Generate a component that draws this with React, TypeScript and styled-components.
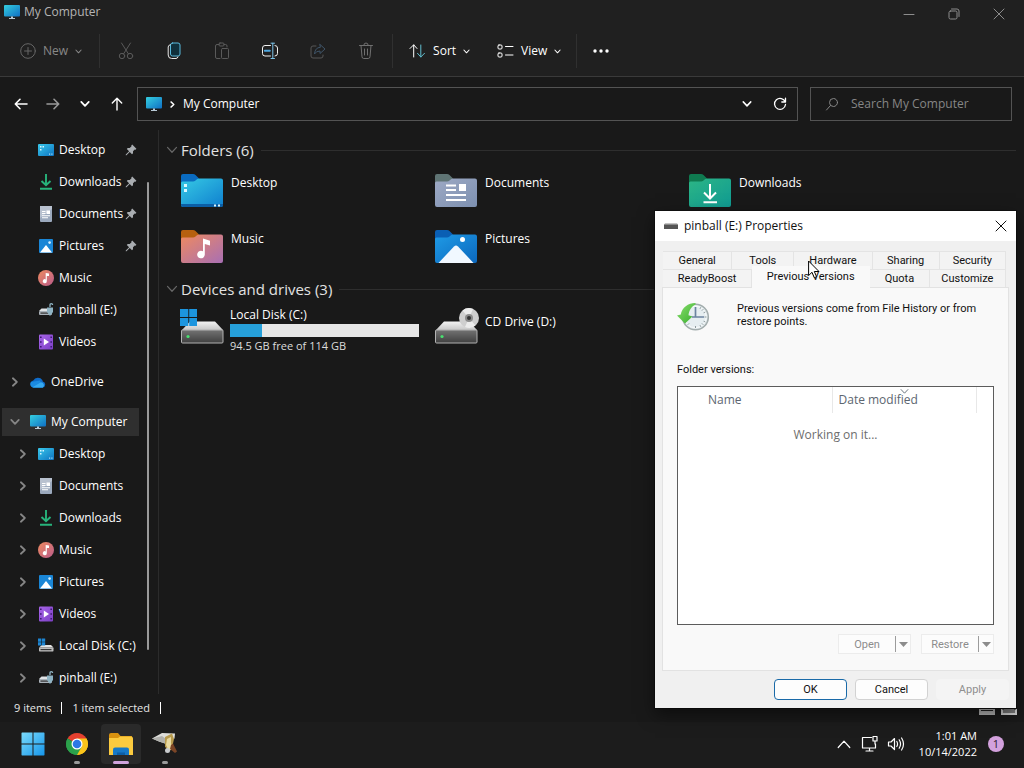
import React from "react";
import styled, { createGlobalStyle, css } from "styled-components";

const shellFont = `"Open Sans", "Noto Sans", sans-serif`;
const dialogFont = `Roboto, "Liberation Sans", sans-serif`;

const GlobalStyle = createGlobalStyle`
  *, *::before, *::after { box-sizing: border-box; }
  body { margin: 0; background: #191919; }
  button, input { font: inherit; color: inherit; }
  button { border: 0; padding: 0; background: none; }
  svg { display: block; flex: none; }
`;

/* ---------- desktop shell ---------- */

const Desktop = styled.div`
  position: relative;
  display: flex;
  flex-direction: column;
  min-height: 100vh;
  background: #191919;
  color: #fff;
  font: 12px/16px ${shellFont};
`;

const Explorer = styled.section`
  display: flex;
  flex-direction: column;
  flex: 1;
`;

const Header = styled.header`
  background: #202020;
  border-bottom: 1px solid #3a3a3a;
`;

const TitleBar = styled.div`
  display: flex;
  align-items: flex-start;
  justify-content: space-between;
  height: 26px;
  padding: 4px 19px 0 4px;
`;

const WindowTitle = styled.h1`
  display: flex;
  gap: 4px;
  margin: 0;
  font-size: 12px;
  font-weight: 400;
  color: #b4b4b4;
`;

const WindowButtons = styled.div`
  display: flex;
  gap: 33px;
  padding-top: 4px;
  color: #8d8d8d;
`;

const Toolbar = styled.div`
  display: flex;
  align-items: center;
  height: 50px;
  padding: 0 20px;
`;

const Tool = styled.button<{ $dim?: boolean; $wide?: boolean }>`
  display: flex;
  align-items: center;
  justify-content: center;
  gap: 7px;
  width: ${(p) => (p.$wide ? "auto" : "48px")};
  height: 32px;
  color: ${(p) => (p.$dim ? "#888" : "#fff")};
`;

const ViewTool = styled(Tool)`
  margin-left: 27px;
`;

const Divider = styled.span<{ $before: number; $after: number }>`
  width: 1px;
  height: 34px;
  margin: 0 ${(p) => p.$after}px 0 ${(p) => p.$before}px;
  background: #303030;
`;

const NavRow = styled.nav`
  display: flex;
  align-items: center;
  gap: 12px;
  padding: 10px 12px 9px 13px;
`;

const NavButtons = styled.div`
  display: flex;
  gap: 16px;
  width: 112px;
`;

const NavButton = styled.button`
  display: flex;
  align-items: center;
  justify-content: center;
  width: 16px;
  height: 16px;
`;

const AddressBar = styled.div`
  display: flex;
  flex: 1;
  align-items: center;
  gap: 7px;
  height: 34px;
  padding: 0 9px 0 8px;
  border: 1px solid #535353;
`;

const AddressGap = styled.span`
  width: 3px;
`;

const Crumb = styled.a`
  flex: 1;
  color: #fff;
  text-decoration: none;
`;

const SearchBox = styled.label`
  display: flex;
  align-items: center;
  gap: 11px;
  width: 202px;
  height: 34px;
  padding: 0 13px;
  border: 1px solid #535353;
  color: #868686;

  input {
    min-width: 0;
    width: 100%;
    padding: 0;
    border: 0;
    outline: 0;
    background: none;
  }
  input::placeholder { color: #868686; opacity: 1; }
`;

const Body = styled.div`
  display: flex;
  flex: 1;
`;

const Sidebar = styled.aside`
  display: flex;
  width: 159px;
  border-right: 1px solid #2b2b2b;
`;

const Tree = styled.ul`
  display: flex;
  flex-direction: column;
  width: 145px;
  margin: 0 2px 0 0;
  padding: 4px 8px 0 2px;
  list-style: none;
`;

const TreeRow = styled.li`
  display: flex;
  align-items: center;
  height: 32px;
  padding: 0 0 0 16px;
`;

const RootRow = styled(TreeRow)<{ $selected?: boolean }>`
  height: 28px;
  margin: 10px -2px 2px 0;
  padding-left: 8px;
  background: ${(p) => (p.$selected ? "#2f2f2f" : "transparent")};
`;

const Expander = styled.span`
  display: flex;
  width: 20px;
  color: #868686;
`;

const TreeLink = styled.a`
  display: flex;
  flex: 1;
  align-items: center;
  gap: 5px;
  color: #fff;
  text-decoration: none;
  white-space: nowrap;
`;

const ScrollThumb = styled.div`
  width: 2px;
  margin: 52px 0 44px;
  border-radius: 1px;
  background: #9a9a9a;
`;

const Content = styled.main`
  flex: 1;
  padding: 9px 8px 0 7px;
`;

const GroupHead = styled.h2`
  display: flex;
  align-items: center;
  gap: 3px;
  height: 22px;
  margin: 0;
  color: #e2e2e2;
  font-size: 15px;
  font-weight: 400;

  &::after {
    content: "";
    flex: 1;
    height: 1px;
    margin-left: 4px;
    background: #2e2e2e;
  }
  > svg { color: #686868; }
`;

const Tiles = styled.div`
  display: grid;
  grid-template-columns: repeat(3, 254px);
  grid-auto-rows: 40px;
  row-gap: 16px;
  padding: 13px 0 8px 15px;
`;

const Tile = styled.a<{ $drive?: boolean }>`
  display: flex;
  align-items: flex-start;
  gap: 7px;
  color: #fff;
  text-decoration: none;

  > svg { margin-top: ${(p) => (p.$drive ? "-6px" : "0")}; }
  > span { padding-top: 1px; }
`;

const DriveInfo = styled.div`
  display: grid;
  width: 189px;
  margin: -6px 0 0 -1px;
  gap: 1px;

  small {
    font-size: 11px;
    color: #dcdcdc;
  }
`;

const Capacity = styled.div`
  height: 13px;
  background: #e6e6e6;
`;

const Used = styled.div`
  height: 100%;
  background: #26a0da;
`;

const StatusBar = styled.footer`
  display: flex;
  align-items: center;
  height: 28px;
  padding: 0 7px 0 14px;
  color: #e6e6e6;
  font-size: 11px;

  span {
    padding-right: 10px;
    margin-right: 10px;
    border-right: 1px solid #fff;
    line-height: 12px;
  }
`;

const ViewModes = styled.div`
  display: flex;
  gap: 6px;
  margin-left: auto;
`;

/* ---------- taskbar ---------- */

const Taskbar = styled.footer`
  display: flex;
  align-items: center;
  height: 46px;
  padding: 0 20px 2px 13px;
  background: #1c1c1c;
`;

const TaskButton = styled.button<{ $state?: "open" | "active" }>`
  position: relative;
  display: flex;
  align-items: center;
  justify-content: center;
  width: 40px;
  height: 40px;
  margin-right: 4px;
  border-radius: 4px;
  background: ${(p) => (p.$state === "active" ? "#2a2a2a" : "transparent")};

  ${(p) =>
    p.$state &&
    css`
      &::after {
        content: "";
        position: absolute;
        bottom: 0;
        width: ${p.$state === "active" ? "16px" : "6px"};
        height: 3px;
        border-radius: 2px;
        background: ${p.$state === "active" ? "#cfa3dc" : "#9a9a9a"};
      }
    `}
`;

const Tray = styled.div`
  display: flex;
  align-items: center;
  gap: 8px;
  margin-left: auto;
`;

const TrayButton = styled.button`
  display: flex;
  justify-content: center;
  min-width: 18px;
`;

const Clock = styled.time`
  margin: 0 3px 0 6px;
  font-size: 11px;
  text-align: right;
`;

const Badge = styled.span`
  width: 16px;
  height: 16px;
  border-radius: 50%;
  background: #d3a1dd;
  color: #2b1a30;
  font-size: 11px;
  text-align: center;
`;

/* ---------- properties dialog ---------- */

const Dialog = styled.section`
  position: absolute;
  top: 211px;
  right: 8px;
  width: 361px;
  background: #f0f0f0;
  color: #111;
  font: 11px/13px ${dialogFont};
  box-shadow: 0 6px 16px rgba(0, 0, 0, 0.5), 0 0 0 1px #111;
`;

const DialogTitle = styled.header`
  display: flex;
  align-items: center;
  gap: 6px;
  height: 30px;
  padding: 0 9px;
  background: #fff;
  font: 12px/16px ${shellFont};

  h2 {
    flex: 1;
    margin: 0;
    font: inherit;
  }
`;

const DialogBody = styled.div`
  padding: 10px 7px 8px;
`;

const TabRow = styled.div`
  display: flex;
  padding: 0 3px 0 1px;
`;

const Tab = styled.button<{ $grow: number; $active?: boolean }>`
  flex: ${(p) => p.$grow} 1 0;
  height: 18px;
  border: 1px solid #e4e4e4;
  border-width: 1px 1px 0 0;
  background: #f3f3f3;
  white-space: nowrap;

  ${(p) =>
    p.$active &&
    css`
      height: 22px;
      margin: -3px 0 -1px;
      padding-bottom: 3px;
      border-color: #f9f9f9;
      background: #f9f9f9;
    `}
`;

const Panel = styled.div`
  padding: 14px 14px 16px;
  border: 1px solid #e2e2e2;
  background: #f9f9f9;
`;

const Intro = styled.div`
  display: flex;
  gap: 26px;
  height: 61px;

  p {
    margin: 0;
    max-width: 240px;
  }
`;

const ListLabel = styled.div`
  margin-bottom: 10px;
`;

const VersionList = styled.div`
  height: 239px;
  border: 1px solid #5c5c5c;
  background: #fff;
  color: #6d6d6d;
  font: 12px/16px ${shellFont};

  table {
    width: 100%;
    border-collapse: collapse;
    table-layout: fixed;
  }
  th {
    position: relative;
    height: 26px;
    padding: 0 0 0 6px;
    border-right: 1px solid #e8e8e8;
    color: #5c6670;
    font-weight: 400;
    text-align: left;
  }
  th:first-child { width: 154px; padding-left: 30px; }
  th:nth-child(2) { width: 144px; }
  th:last-child { border: 0; }
  th svg {
    position: absolute;
    top: 0;
    left: 67px;
  }
  td {
    height: 44px;
    padding: 0;
    text-align: center;
  }
`;

const PanelActions = styled.div`
  display: flex;
  justify-content: flex-end;
  gap: 10px;
  padding-top: 9px;
`;

const Split = styled.div`
  display: flex;
  align-items: center;
  width: 73px;
  height: 20px;
  border: 1px solid #ececec;
  color: #8c8c8c;
  background: #fcfcfc;
`;

const SplitMain = styled.button`
  flex: 1;
`;

const SplitArrow = styled.button`
  display: flex;
  align-items: center;
  justify-content: center;
  width: 15px;
  height: 16px;
  border-left: 1px solid #9c9c9c;
`;

const DialogActions = styled.div`
  display: flex;
  justify-content: flex-end;
  gap: 8px;
  padding-top: 8px;
`;

const PushButton = styled.button<{ $primary?: boolean }>`
  width: 73px;
  height: 21px;
  border: 1px solid ${(p) => (p.$primary ? "#1a6aa8" : "#d2d2d2")};
  border-radius: 4px;
  background: #fdfdfd;

  &:disabled {
    border-color: #f4f4f4;
    background: #f4f4f4;
    color: #8f8f8f;
  }
`;

const Cursor = styled.div`
  position: absolute;
  top: 49px;
  left: 153px;
  pointer-events: none;
`;

/* ---------- icons ---------- */

const stroke = { fill: "none", stroke: "currentColor", strokeLinecap: "round", strokeLinejoin: "round" } as const;

const Chevron = ({ dir = "down", size = 7, w = 1.2 }: { dir?: "down" | "right" | "up"; size?: number; w?: number }) => (
  <svg width={size} height={size} viewBox="0 0 8 8" {...stroke} strokeWidth={w}>
    <path d={dir === "down" ? "M1 2.3 4 5.5 7 2.3" : dir === "up" ? "M.7 6 4 2.4 7.3 6" : "M2.3 1 5.5 4 2.3 7"} />
  </svg>
);

const Monitor = () => (
  <svg width="16" height="16" viewBox="0 0 16 16">
    <defs>
      <linearGradient id="mon" x1="0" y1="0" x2="1" y2="1">
        <stop stopColor="#35cfe0" /><stop offset="1" stopColor="#0f6fc4" />
      </linearGradient>
    </defs>
    <rect y="1" width="16" height="11.5" rx="1" fill="url(#mon)" />
    <path d="M7 12.500h2V14h2v1H5v-1h2z" fill="#b9cad6" />
  </svg>
);

const DesktopIcon = () => (
  <svg width="16" height="16" viewBox="0 0 16 16">
    <defs>
      <linearGradient id="desk" x1="0" y1="0" x2="1" y2="1">
        <stop stopColor="#39c8ea" /><stop offset="1" stopColor="#0d73c2" />
      </linearGradient>
    </defs>
    <rect y="2" width="16" height="12" rx="1" fill="url(#desk)" />
    <path d="M2 4h1.500v1.500H2zM2 7h1.500v1.500H2zM4.500 4H6v1.500H4.500z" fill="#d9f6ff" />
    <path d="M11 11.500h1.200v1.200H11zM13.300 11.500h1.200v1.200h-1.200z" fill="#a8dcf5" />
  </svg>
);

const DownloadIcon = () => (
  <svg width="16" height="16" viewBox="0 0 16 16" fill="none" stroke="#27b37b" strokeWidth="1.900">
    <path d="M8 0v11M3.500 7 8 11.300 12.500 7M2 14.800h12" />
  </svg>
);

const DocumentIcon = () => (
  <svg width="16" height="16" viewBox="0 0 16 16">
    <rect x="2" width="12" height="16" rx="1" fill="#9ba9bd" />
    <path d="M2 0h12v3L2 12z" fill="#b8c1cf" />
    <path d="M4 5h3.500v1H4zM4 7h3.500v1H4zM8.500 4.500H12V8H8.500zM4 9.300h8v1H4zM4 11.300h6v1H4z" fill="#fff" />
  </svg>
);

const PicturesIcon = () => (
  <svg width="16" height="16" viewBox="0 0 16 16">
    <rect x="1" y="1" width="14" height="14" rx="1" fill="#1a86d6" />
    <path d="M2 14.500 8 7l6 7.500z" fill="#fff" />
    <circle cx="11.600" cy="4.600" r="1.300" fill="#d8f1ff" />
  </svg>
);

const MusicIcon = () => (
  <svg width="16" height="16" viewBox="0 0 16 16">
    <defs>
      <linearGradient id="mus" x1="0" y1="0" x2="1" y2="1">
        <stop stopColor="#ee8a5f" /><stop offset="1" stopColor="#b95b8a" />
      </linearGradient>
    </defs>
    <circle cx="8" cy="8" r="8" fill="url(#mus)" />
    <path d="M7.700 3v6.400a2 2 0 1 0 1.100 1.800V6h2.200V3.600z" fill="#fff" />
  </svg>
);

const VideosIcon = () => (
  <svg width="16" height="16" viewBox="0 0 16 16">
    <defs>
      <linearGradient id="vid" x1="0" y1="0" x2="1" y2="1">
        <stop stopColor="#a865ea" /><stop offset="1" stopColor="#7b3fc4" />
      </linearGradient>
    </defs>
    <rect x="1" y="0.500" width="14" height="15" rx="1" fill="url(#vid)" />
    <path d="M2 2.500h1.600v1.600H2zM2 7.200h1.600v1.600H2zM2 12h1.600v1.600H2zM12.400 2.500H14v1.600h-1.600zM12.400 7.200H14v1.600h-1.600zM12.400 12H14v1.600h-1.600z" fill="#3d1a72" />
    <path d="M5.800 4.500v7l5.200-3.500z" fill="#fff" />
  </svg>
);

const PinballIcon = () => (
  <svg width="16" height="16" viewBox="0 0 16 16">
    <path d="M3.500 6.500h9L15 9H1z" fill="#dfe3e6" />
    <rect x="1" y="9" width="13" height="4" rx="1" fill="#a9b1b8" />
    <path d="M2.500 10.500h8v1.200h-8z" fill="#333" />
    <path d="M9 5.500h6V10l-3 4-3-4z" fill="#8fb4c4" />
    <path d="M12 5V3q0-1.300 1.300-1.300T14.600 3" fill="none" stroke="#8fb4c4" strokeWidth="1.300" />
  </svg>
);

const DiskIcon = () => (
  <svg width="16" height="16" viewBox="0 0 16 16">
    <path d="M4 7h9l2.500 2.500H1z" fill="#e4e4e4" />
    <rect x="1" y="9.500" width="14.500" height="4" rx=".7" fill="#bdbdbd" />
    <path d="M2.500 11h11v1.200h-11z" fill="#3a3a3a" />
    <path d="M0 .5h3.300v3.200H0zM3.900.5h3.300v3.200H3.900zM0 4.300h3.300v3.200H0zM3.900 4.300h3.300v3.200H3.900z" fill="#1d86d4" />
  </svg>
);

const OneDriveIcon = () => (
  <svg width="16" height="16" viewBox="0 0 16 16">
    <path d="M3.500 13.500A3.500 3.500 0 0 1 3.300 6.600 5.200 5.200 0 0 1 12.300 6l.5 1.500A3.100 3.100 0 0 1 13 13.500z" fill="#0f6cc9" />
    <path d="M3.500 13.500A3.500 3.500 0 0 1 1 8l9-1.500 3 7z" fill="#1b8ae0" />
    <path d="M2.500 13.300 11 8.300a3 3 0 0 1 2 5.200H3.500z" fill="#36a9ef" />
  </svg>
);

const PinIcon = () => (
  <svg width="12" height="12" viewBox="0 0 12 12" fill="#a9adb1">
    <path d="M7.200.6 11.400 4.800 10.600 5.700 9.800 5.500 8 7.300 8 9.300 7 10.200 4.700 7.900 1.500 11.200.7 11.300.8 10.500 4.100 7.300 1.800 5 2.700 4 4.700 4 6.500 2.200 6.300 1.400z" />
  </svg>
);

type FolderKind = "desktop" | "documents" | "downloads" | "music" | "pictures";

const folderColours: Record<FolderKind, [string, string, string]> = {
  desktop: ["#0a6bc0", "#36c9e4", "#0f7fcf"],
  documents: ["#5f7474", "#9da9c4", "#7d90b0"],
  downloads: ["#0f7a50", "#2cb585", "#109b93"],
  music: ["#b6600f", "#ee8a60", "#a86fb4"],
  pictures: ["#0a5fb4", "#1f9be6", "#0b67bd"],
};

const FolderIcon = ({ kind }: { kind: FolderKind }) => {
  const [back, from, to] = folderColours[kind];
  return (
    <svg width="43" height="34" viewBox="0 0 43 34">
      <defs>
        <linearGradient id={`folder-${kind}`} x1="0" y1="0" x2="1" y2="1">
          <stop stopColor={from} /><stop offset="1" stopColor={to} />
        </linearGradient>
      </defs>
      <path d="M0 2Q0 0 2 0h10q1.500 0 2.500 1L18 4.500V10H0z" fill={back} />
      <path d="M0 9q0-1.500 1.500-1.500H12q1.500 0 2.500-1l1.500-1.300q1-.7 2-.7h22q2 0 2 2V31q0 2-2 2H2q-2 0-2-2z" fill={`url(#folder-${kind})`} />
      {kind === "desktop" && (
        <>
          <path d="M0 30h42v1q0 2-2 2H2q-2 0-2-2z" fill="#0b5ea6" />
          <path d="M3 10h3v3H3zM3 15h3v3H3zM33 30.500h2v2h-2zM37 30.500h2v2h-2z" fill="#d9f8ff" />
        </>
      )}
      {kind === "documents" && (
        <path d="M11 10.500h10v2H11zM11 15h10v2H11zM24 10h7v7h-7zM11 20h20v2H11zM11 25h20v2H11z" fill="#fff" />
      )}
      {kind === "downloads" && (
        <path d="M21 10v14M15 18.500l6 6 6-6M14.500 28.200h13.500" fill="none" stroke="#fff" strokeWidth="2" />
      )}
      {kind === "music" && (
        <path d="M22 8.500v12.800a3.800 3.800 0 1 0 1.800 3.200V14l5.200 1.500v-4.800z" fill="#fff" />
      )}
      {kind === "pictures" && (
        <>
          <path d="M3.500 33 19 16.500q2-2 4 0L38.500 33z" fill="#f1f8ff" />
          <circle cx="27.500" cy="9.500" r="2.500" fill="#fff" />
        </>
      )}
    </svg>
  );
};

const DriveIcon = ({ kind }: { kind: "windows" | "disc" }) => (
  <svg width="43" height="37" viewBox="0 0 43 37" overflow="visible">
    <defs>
      <linearGradient id="drv" x1="0" y1="0" x2="0" y2="1">
        <stop stopColor="#737373" /><stop offset="1" stopColor="#3f3f3f" />
      </linearGradient>
      <linearGradient id="top" x1="0" y1="0" x2="0" y2="1">
        <stop stopColor="#f3f3f3" /><stop offset="1" stopColor="#c4c4c4" />
      </linearGradient>
    </defs>
    <path d="M9 14.500h25L42.500 23.500h-42z" fill="url(#top)" />
    <rect x=".5" y="23" width="41.500" height="13" rx="1" fill="url(#drv)" stroke="#b3b3b3" />
    <circle cx="7" cy="29.500" r="1.600" fill="#49df70" />
    {kind === "windows" ? (
      <path d="M-1 2h8.300v8H-1zM8.200 2H16v8H8.200zM-1 11h8.300v8H-1zM8.200 11H16v8H8.200z" fill="#1c95de" />
    ) : (
      <>
        <circle cx="34" cy="11" r="10" fill="#cfcfcf" />
        <path d="M34 11 27.500 3.500A10 10 0 0 1 38 2zM34 11l6.500 7.500A10 10 0 0 1 30 20z" fill="#ececec" />
        <circle cx="34" cy="11" r="4" fill="#8b8b8b" />
        <circle cx="34" cy="11" r="2" fill="#333" />
      </>
    )}
  </svg>
);

const HistoryIcon = () => (
  <svg width="34" height="30" viewBox="0 0 34 30">
    <defs>
      <linearGradient id="arrow" x1="0" y1="0" x2="1" y2="1">
        <stop stopColor="#8be070" /><stop offset="1" stopColor="#38ad2c" />
      </linearGradient>
    </defs>
    <circle cx="18.500" cy="15" r="12.800" fill="#e6eef1" stroke="#a3adad" strokeWidth="1.600" />
    <circle cx="18.500" cy="15" r="10.800" fill="none" stroke="#f8fbfb" />
    <path d="M18.500 24v2M29.500 15h-2M26.300 7.200l-1.400 1.400M26.300 22.800l-1.400-1.400M10.700 22.800l1.400-1.400M23.800 5.200l-.8 1.600M23.800 24.800l-.8-1.600M28.300 10l-1.700.8M28.300 20l-1.700-.8" stroke="#8e9a9d" />
    <path d="M18.500 5V15.500M15 15h12" fill="none" stroke="#6b83a0" strokeWidth="1.700" />
    <path d="M18.500 1C11 1 5 5.500 3.800 12.500L0 13.500 8 21.500 15.500 14.500 11.500 13.200C12 8.500 14.500 4.500 18.500 2.500z" fill="url(#arrow)" />
  </svg>
);

const StartIcon = () => (
  <svg width="24" height="24" viewBox="0 0 24 24">
    <defs>
      <linearGradient id="start" gradientUnits="userSpaceOnUse" x1="0" y1="0" x2="24" y2="24">
        <stop stopColor="#7ddcfb" /><stop offset="1" stopColor="#1494ea" />
      </linearGradient>
    </defs>
    <path d="M1 .5h10.500V11.500H.5V1zM12.500.5H23l.5.5v10.500h-11zM.5 12.500h11v11H1l-.5-.5zM12.500 12.500h11V23l-.5.500H12.500z" fill="url(#start)" />
  </svg>
);

const ChromeIcon = () => (
  <svg width="24" height="24" viewBox="0 0 24 24">
    <path d="M12 12 2.500 6.500A11 11 0 0 1 21.500 6.500z" fill="#e5402f" />
    <path d="M12 12 21.500 6.500A11 11 0 0 1 12 23z" fill="#fbc41a" />
    <path d="M12 12v11A11 11 0 0 1 2.500 6.500z" fill="#2ba14b" />
    <path d="M12 6.500h9.500A11 11 0 0 1 12 23l4.700-8.200z" fill="#fbc41a" />
    <path d="M12 17.500 7.200 14.700 2.500 6.500A11 11 0 0 0 12 23l4.700-8.200z" fill="#2ba14b" />
    <circle cx="12" cy="12" r="5.500" fill="#fff" />
    <circle cx="12" cy="12" r="4.300" fill="#2d78e6" />
  </svg>
);

const ExplorerIcon = () => (
  <svg width="26" height="24" viewBox="0 0 26 24">
    <path d="M1 3q0-2 2-2h7l2.500 3H24v6H1z" fill="#d9920f" />
    <path d="M1 6h9l2-1.500h11q2 0 2 2V23H1z" fill="#fccb3f" />
    <path d="M5 23v-5.500q0-2 2-2h12q2 0 2 2V23z" fill="#1779c7" />
    <path d="M9 23v-2.500h8V23z" fill="#0d5fa6" />
  </svg>
);

const GameIcon = () => (
  <svg width="26" height="24" viewBox="0 0 26 24">
    <path d="M0 6.500 10 1l13 .5-.5 5L13 11.500 7 9.500z" fill="#dededa" />
    <path d="M0 6.500 10 4l4 3-1 4.500L7 9.500z" fill="#b0b0ac" />
    <path d="m13 5 7-3.500L22 7l-2 9-4 3-3-4.500z" fill="#b79a4c" />
    <path d="m15 7 4-2v6l1.500 6-3.500 2-3-6z" fill="#e8d9a0" />
    <path d="m19 13 2-1.500 4 8-2 1.500-5-4z" fill="#7b4526" />
    <circle cx="15.500" cy="18.500" r="2.500" fill="#c9cbcd" />
  </svg>
);

const icons16: Record<string, () => React.JSX.Element> = {
  Desktop: DesktopIcon,
  Downloads: DownloadIcon,
  Documents: DocumentIcon,
  Pictures: PicturesIcon,
  Music: MusicIcon,
  Videos: VideosIcon,
  "pinball (E:)": PinballIcon,
  "Local Disk (C:)": DiskIcon,
  OneDrive: OneDriveIcon,
  "My Computer": Monitor,
};

/* ---------- composed parts ---------- */

type NodeProps = { name: string; pinned?: boolean; expand?: "right" | "down"; root?: boolean; selected?: boolean };

const TreeNode = ({ name, pinned, expand, root, selected }: NodeProps) => {
  const Icon = icons16[name];
  const body = (
    <>
      <Expander>{expand && <Chevron dir={expand} size={10} w={1.4} />}</Expander>
      <TreeLink href="#">
        <Icon />
        {name}
      </TreeLink>
      {pinned && <PinIcon />}
    </>
  );
  return root ? <RootRow $selected={selected}>{body}</RootRow> : <TreeRow>{body}</TreeRow>;
};

const quickAccess: NodeProps[] = [
  { name: "Desktop", pinned: true },
  { name: "Downloads", pinned: true },
  { name: "Documents", pinned: true },
  { name: "Pictures", pinned: true },
  { name: "Music" },
  { name: "pinball (E:)" },
  { name: "Videos" },
];

const computerNodes = ["Desktop", "Documents", "Downloads", "Music", "Pictures", "Videos", "Local Disk (C:)", "pinball (E:)"];

const folders: { name: string; kind: FolderKind }[] = [
  { name: "Desktop", kind: "desktop" },
  { name: "Documents", kind: "documents" },
  { name: "Downloads", kind: "downloads" },
  { name: "Music", kind: "music" },
  { name: "Pictures", kind: "pictures" },
];

const CommandBar = () => (
  <Toolbar>
    <Tool $wide $dim>
      <svg width="16" height="16" viewBox="0 0 16 16" {...stroke} stroke="#666">
        <circle cx="8" cy="8" r="7.300" /><path d="M8 4.500v7M4.500 8h7" />
      </svg>
      New
      <Chevron />
    </Tool>
    <Divider $before={17} $after={2} />
    <Tool $dim aria-label="Cut">
      <svg width="16" height="18" viewBox="0 0 16 18" {...stroke} stroke="#5a5a5a">
        <path d="M3.500 1 10.500 12M12.500 1 5.500 12" /><circle cx="4" cy="14" r="2.700" /><circle cx="12" cy="14" r="2.700" />
      </svg>
    </Tool>
    <Tool aria-label="Copy">
      <svg width="14" height="18" viewBox="0 0 14 18" {...stroke}>
        <rect x="3.500" y="1" width="9.500" height="13" rx="2" stroke="#58b9dc" fill="#10303c" />
        <path d="M3.200 2.700Q1.200 3.200 1.200 5v8q0 3.500 3.500 3.500H9q1.500 0 2-1.600" stroke="#e8e8e8" />
      </svg>
    </Tool>
    <Tool $dim aria-label="Paste">
      <svg width="16" height="18" viewBox="0 0 16 18" {...stroke} stroke="#5a5a5a">
        <path d="M5 2.500H3Q1.500 2.500 1.500 4v11Q1.500 16.500 3 16.500h3M10 2.500h1.500Q13 2.500 13 4v1" />
        <rect x="5" y="1" width="5" height="3" rx="1" /><rect x="7.500" y="6.500" width="7" height="10" rx="1" />
      </svg>
    </Tool>
    <Tool aria-label="Rename">
      <svg width="18" height="18" viewBox="0 0 18 18" {...stroke} stroke="#f0f0f0">
        <path d="M9.500 3.500H4Q1.500 3.500 1.500 6v5.500Q1.500 14 4 14h5.500M14 3.500q2.500 0 2.500 2.500v5.500q0 2.500-2.500 2.500" />
        <path d="M3.800 8.700h5" stroke="#4fa8e0" strokeWidth="2" /><path d="M10 1.200h3.500M10 16.500h3.500M11.800 1.200v15.300" stroke="#7cc4ea" />
      </svg>
    </Tool>
    <Tool $dim aria-label="Share">
      <svg width="16" height="16" viewBox="0 0 16 16" {...stroke} stroke="#565656">
        <path d="M6 3H3Q1 3 1 5v8q0 2 2 2h8q2 0 2-2v-1" />
        <path d="M10 1.500 15 6l-5 4.500V8Q6 8 4.500 11 5 4.500 10 4.300z" stroke="#3f5468" />
      </svg>
    </Tool>
    <Tool $dim aria-label="Delete">
      <svg width="16" height="18" viewBox="0 0 16 18" {...stroke} stroke="#707070">
        <path d="M1.500 3.500h13M5.800 3.300Q5.800 1 8 1t2.200 2.300M3 3.500l1 11.300q.2 1.700 1.700 1.700h4.600q1.500 0 1.700-1.700L13 3.500M6.500 7v6M9.500 7v6" />
      </svg>
    </Tool>
    <Divider $before={2} $after={16} />
    <Tool $wide>
      <svg width="17" height="16" viewBox="0 0 17 16" {...stroke}>
        <path d="M4.700 14V2M1 5.500 4.700 1.800 8 5.500" /><path d="M11.800 2v12M8.500 10.300l3.300 3.700 3.700-3.700" stroke="#62bfd0" />
      </svg>
      Sort
      <Chevron />
    </Tool>
    <ViewTool $wide>
      <svg width="17" height="16" viewBox="0 0 17 16" {...stroke}>
        <rect x="1" y="2" width="4" height="4" rx="1" /><rect x="1" y="10" width="4" height="4" rx="1" /><path d="M8.500 3.500H16M8.500 12H16" />
      </svg>
      View
      <Chevron />
    </ViewTool>
    <Divider $before={15} $after={0} />
    <Tool aria-label="See more">
      <svg width="18" height="4" viewBox="0 0 18 4" fill="#fff">
        <circle cx="3" cy="2" r="1.700" /><circle cx="9" cy="2" r="1.700" /><circle cx="15" cy="2" r="1.700" />
      </svg>
    </Tool>
  </Toolbar>
);

const ExplorerWindow = () => (
  <Explorer>
    <Header>
      <TitleBar>
        <WindowTitle><Monitor />My Computer</WindowTitle>
        <WindowButtons>
          <button aria-label="Minimize">
            <svg width="12" height="12" viewBox="0 0 12 12" {...stroke}><path d="M1 6.500h10" /></svg>
          </button>
          <button aria-label="Restore">
            <svg width="12" height="12" viewBox="0 0 12 12" {...stroke}>
              <rect x="1" y="3" width="8" height="8" rx="1.500" /><path d="M3.500 1H9q2 0 2 2v5.500" />
            </svg>
          </button>
          <button aria-label="Close">
            <svg width="12" height="12" viewBox="0 0 12 12" {...stroke}><path d="m1 1 10 10M11 1 1 11" /></svg>
          </button>
        </WindowButtons>
      </TitleBar>
      <CommandBar />
    </Header>
    <NavRow>
      <NavButtons>
        <NavButton aria-label="Back">
          <svg width="14" height="12" viewBox="0 0 14 12" {...stroke} strokeWidth="1.600"><path d="M13 6H1.500M6 1.300 1.300 6 6 10.700" /></svg>
        </NavButton>
        <NavButton aria-label="Forward">
          <svg width="14" height="12" viewBox="0 0 14 12" {...stroke} stroke="#9a9a9a" strokeWidth="1.600"><path d="M1 6h11.500M8 1.300 12.700 6 8 10.700" /></svg>
        </NavButton>
        <NavButton aria-label="Recent locations"><Chevron size={10} w={1.4} /></NavButton>
        <NavButton aria-label="Up">
          <svg width="12" height="14" viewBox="0 0 12 14" {...stroke} strokeWidth="1.400"><path d="M6 13V1.500M1.300 6 6 1.300 10.700 6" /></svg>
        </NavButton>
      </NavButtons>
      <AddressBar>
        <Monitor />
        <Chevron dir="right" w={1.6} />
        <Crumb href="#">My Computer</Crumb>
        <NavButton aria-label="Previous locations"><Chevron size={10} /></NavButton>
        <AddressGap />
        <NavButton aria-label="Refresh">
          <svg width="14" height="14" viewBox="0 0 14 14" {...stroke} strokeWidth="1.300">
            <path d="M12.200 5A5.500 5.500 0 1 0 12.500 7.500M12.500 1.200V5H8.800" />
          </svg>
        </NavButton>
      </AddressBar>
      <SearchBox>
        <svg width="16" height="16" viewBox="0 0 16 16" {...stroke}>
          <circle cx="9.500" cy="6.500" r="4" /><path d="m6.500 9.500-4 4.500" />
        </svg>
        <input aria-label="Search" placeholder="Search My Computer" />
      </SearchBox>
    </NavRow>
    <Body>
      <Sidebar>
        <Tree>
          {quickAccess.map((n) => <TreeNode key={n.name} {...n} />)}
          <TreeNode name="OneDrive" root expand="right" />
          <TreeNode name="My Computer" root selected expand="down" />
          {computerNodes.map((n) => <TreeNode key={n} name={n} expand="right" />)}
        </Tree>
        <ScrollThumb />
      </Sidebar>
      <Content>
        <GroupHead><Chevron size={12} w={0.8} />Folders (6)</GroupHead>
        <Tiles>
          {folders.map((f) => (
            <Tile key={f.kind} href="#">
              <FolderIcon kind={f.kind} />
              <span>{f.name}</span>
            </Tile>
          ))}
        </Tiles>
        <GroupHead><Chevron size={12} w={0.8} />Devices and drives (3)</GroupHead>
        <Tiles>
          <Tile href="#" $drive>
            <DriveIcon kind="windows" />
            <DriveInfo>
              Local Disk (C:)
              <Capacity><Used style={{ width: `${Math.round((1 - 94.5 / 114) * 100)}%` }} /></Capacity>
              <small>94.5 GB free of 114 GB</small>
            </DriveInfo>
          </Tile>
          <Tile href="#" $drive>
            <DriveIcon kind="disc" />
            <span>CD Drive (D:)</span>
          </Tile>
        </Tiles>
      </Content>
    </Body>
    <StatusBar>
      <span>9 items</span>
      <span>1 item selected</span>
      <ViewModes>
        <svg width="16" height="14" viewBox="0 0 16 14"><path d="M0 0h16v14H0z" fill="#b4b4b4" /><path d="M2 3.500h12M2 6.500h12M2 9.500h12" stroke="#222" /></svg>
        <svg width="16" height="14" viewBox="0 0 16 14"><path d="M0 0h16v14H0z" fill="#d4d4d4" /><path d="M2 2h12v7H2zM2 11h12" stroke="#222" fill="none" /></svg>
      </ViewModes>
    </StatusBar>
  </Explorer>
);

const Properties = () => (
  <Dialog role="dialog" aria-labelledby="props-title">
    <DialogTitle>
      <svg width="14" height="6" viewBox="0 0 14 6"><path d="M1 0h12l1 2H0z" fill="#c4c4c4" /><path d="M0 1.500h14V6H0z" fill="#555" /></svg>
      <h2 id="props-title">pinball (E:) Properties</h2>
      <button aria-label="Close dialog">
        <svg width="12" height="12" viewBox="0 0 12 12" {...stroke}><path d="m1 1 10 10M11 1 1 11" /></svg>
      </button>
    </DialogTitle>
    <DialogBody>
      <div role="tablist">
        <TabRow>
          <Tab role="tab" $grow={69}>General</Tab>
          <Tab role="tab" $grow={62}>Tools</Tab>
          <Tab role="tab" $grow={78}>Hardware</Tab>
          <Tab role="tab" $grow={67}>Sharing</Tab>
          <Tab role="tab" $grow={66}>Security</Tab>
        </TabRow>
        <TabRow>
          <Tab role="tab" $grow={89}>ReadyBoost</Tab>
          <Tab role="tab" $grow={118} $active aria-selected>Previous Versions</Tab>
          <Tab role="tab" $grow={59}>Quota</Tab>
          <Tab role="tab" $grow={76}>Customize</Tab>
        </TabRow>
      </div>
      <Panel role="tabpanel">
        <Intro>
          <HistoryIcon />
          <p>Previous versions come from File History or from restore points.</p>
        </Intro>
        <ListLabel id="versions-label">Folder versions:</ListLabel>
        <VersionList>
          <table aria-labelledby="versions-label">
            <thead>
              <tr>
                <th>Name</th>
                <th>Date modified<Chevron size={9} w={0.8} /></th>
                <th aria-hidden="true" />
              </tr>
            </thead>
            <tbody>
              <tr><td colSpan={3}>Working on it...</td></tr>
            </tbody>
          </table>
        </VersionList>
        <PanelActions>
          {["Open", "Restore"].map((label) => (
            <Split key={label}>
              <SplitMain>{label}</SplitMain>
              <SplitArrow aria-label={`${label} options`}>
                <svg width="9" height="5" viewBox="0 0 9 5"><path d="M0 0h9L4.500 5z" fill="#8c8c8c" /></svg>
              </SplitArrow>
            </Split>
          ))}
        </PanelActions>
      </Panel>
      <DialogActions>
        <PushButton $primary>OK</PushButton>
        <PushButton>Cancel</PushButton>
        <PushButton disabled>Apply</PushButton>
      </DialogActions>
    </DialogBody>
    <Cursor>
      <svg width="12" height="19" viewBox="0 0 12 19">
        <path d="M.6 1v14.500L4 12.300l2.300 5.400 2.300-1L6.300 11.500H11z" fill="#fff" stroke="#000" strokeWidth="1" />
      </svg>
    </Cursor>
  </Dialog>
);

export default function App() {
  return (
    <>
      <GlobalStyle />
      <Desktop>
        <ExplorerWindow />
        <Taskbar>
          <TaskButton aria-label="Start"><StartIcon /></TaskButton>
          <TaskButton $state="open" aria-label="Chrome"><ChromeIcon /></TaskButton>
          <TaskButton $state="active" aria-label="File Explorer"><ExplorerIcon /></TaskButton>
          <TaskButton $state="open" aria-label="Pinball"><GameIcon /></TaskButton>
          <Tray>
            <TrayButton aria-label="Show hidden icons"><Chevron dir="up" size={14} w={0.7} /></TrayButton>
            <TrayButton aria-label="Network">
              <svg width="18" height="18" viewBox="0 0 18 18" {...stroke} strokeWidth="1.200">
                <path d="M10.500 2.500H1.500v10.500h13V9M5 16h7M8.500 13v3" /><rect x="12" y="1.500" width="4" height="4.500" /><path d="M14 6v3" />
              </svg>
            </TrayButton>
            <TrayButton aria-label="Volume">
              <svg width="18" height="18" viewBox="0 0 18 18" {...stroke} strokeWidth="1.200">
                <path d="M1.500 7v4H4l3.500 3.500v-11L4 7zM9.800 6.500q1.500 2.500 0 5M12.200 4.800q2.700 4.200 0 8.400M14.600 3q3.800 6 0 12" />
              </svg>
            </TrayButton>
            <Clock>1:01 AM<br />10/14/2022</Clock>
            <Badge>1</Badge>
          </Tray>
        </Taskbar>
        <Properties />
      </Desktop>
    </>
  );
}
